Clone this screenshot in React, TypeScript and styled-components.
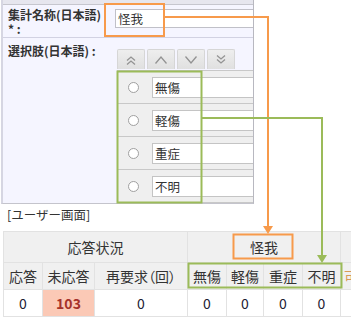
import React from 'react';
import styled, { createGlobalStyle } from 'styled-components';

const GlobalStyle = createGlobalStyle`
  html, body {
    margin: 0;
    padding: 0;
    background: #ffffff;
  }
  body {
    font-family: 'Noto Sans CJK JP', 'Noto Sans', sans-serif;
    color: #333;
  }
`;

const ORANGE = '#f79a4b';
const GREEN = '#9bbb59';

const Canvas = styled.div`
  position: relative;
  width: 351px;
  height: 322px;
  overflow: hidden;
  background: #fff;
`;

const FormPanel = styled.div`
  width: 253px;
  height: 204px;
  margin-left: 1px;
  border-left: 2px solid #d6d6e2;
  border-right: 1px solid #b8b8c0;
  border-bottom: 1px solid #c4c4cc;
  background: #f5f5ff;
  overflow: hidden;
  display: flex;
  flex-direction: column;
  box-sizing: border-box;
`;

const TopBand = styled.div`
  height: 4px;
  background: #e6e6ee;
  border-bottom: 1px solid #c6c6ce;
`;

const FormRow = styled.div<{ $h: number; $line?: boolean }>`
  display: grid;
  grid-template-columns: 109px 1fr;
  height: ${(p) => p.$h}px;
  border-bottom: ${(p) => (p.$line ? '1px solid #d2d2e2' : 'none')};
`;

const Label = styled.div<{ $top: number }>`
  padding: ${(p) => p.$top}px 0 0 5px;
  font-size: 12px;
  font-weight: bold;
  line-height: 14px;
  color: #333;
  white-space: nowrap;
`;

const Value = styled.div<{ $top: number }>`
  padding: ${(p) => p.$top}px 0 0 3px;
  min-width: 0;
`;

const NameInput = styled.div`
  height: 17px;
  width: 200px;
  background: #fff;
  border: 1px solid #c0c0c8;
  font-size: 12.5px;
  line-height: 17px;
  padding-left: 2px;
  color: #333;
`;

const MoveBar = styled.div`
  display: flex;
  gap: 2px;
  margin-left: 2px;
  height: 20px;
  margin-bottom: 1px;
`;

const MoveButton = styled.div`
  width: 28px;
  height: 20px;
  background: linear-gradient(#eeeeee, #e0e0e0);
  border: 1px solid #d6d6d6;
  border-bottom: none;
  box-sizing: border-box;
  border-radius: 2px 2px 0 0;
  display: flex;
  align-items: center;
  justify-content: center;
`;

const ChoiceList = styled.div`
  margin-left: 2px;
  width: 200px;
  border-top: 1px solid #c8c8c8;
`;

const ChoiceRow = styled.div`
  height: 32px;
  background: #efefef;
  border-bottom: 1px solid #c8c8c8;
  display: flex;
  align-items: center;
`;

const Radio = styled.span`
  width: 9px;
  height: 9px;
  border-radius: 50%;
  border: 1px solid #a0a0a0;
  background: #fff;
  margin-left: 11px;
  flex: none;
`;

const ChoiceInput = styled.div`
  margin-left: 13px;
  height: 19px;
  flex: 1;
  background: #fff;
  border: 1px solid #c4c4c4;
  border-right: none;
  font-size: 12.5px;
  line-height: 19px;
  padding-left: 2px;
  color: #333;
`;

const Caption = styled.div`
  height: 27px;
  padding-left: 7px;
  font-size: 12.5px;
  line-height: 22px;
  color: #333;
`;

const Summary = styled.table`
  margin-left: 3px;
  border-collapse: collapse;
  table-layout: fixed;
  width: 380px;
  font-size: 14px;
  font-feature-settings: 'palt';
`;

const HeadCell = styled.th<{ $h: number; $tint?: string }>`
  height: ${(p) => p.$h}px;
  padding: 0;
  background: #f0f0f0;
  border: 1px solid #e2e2e2;
  font-weight: normal;
  color: ${(p) => p.$tint || '#333'};
  text-align: center;
  white-space: nowrap;
  overflow: hidden;
`;

const DataCell = styled.td<{ $alert?: boolean }>`
  height: 26px;
  padding: 0;
  border: 1px solid #e2e2e2;
  text-align: center;
  font-size: 14px;
  background: ${(p) => (p.$alert ? '#fbc9b6' : '#fff')};
  color: ${(p) => (p.$alert ? '#a6332b' : '#223')};
  font-weight: ${(p) => (p.$alert ? 'bold' : 'normal')};
`;

const Overlay = styled.svg`
  position: absolute;
  left: 0;
  top: 0;
  pointer-events: none;
`;

const Chevrons = ({ dir, double }: { dir: 'up' | 'down'; double?: boolean }) => {
  const flip = dir === 'down';
  const pts = double
    ? ['3,7.5 7,4 11,7.5', '3,11.5 7,8 11,11.5']
    : ['1.5,10.5 7,4 12.5,10.5'];
  return (
    <svg width="14" height="14" viewBox="0 0 14 14">
      <g transform={flip ? 'translate(0 14) scale(1 -1)' : undefined}>
        {pts.map((p) => (
          <polyline key={p} points={p} fill="none" stroke="#939393" strokeWidth="1.3" />
        ))}
      </g>
    </svg>
  );
};

const choices = ['無傷', '軽傷', '重症', '不明'];

export default function App() {
  return (
    <>
      <GlobalStyle />
      <Canvas>
        <FormPanel>
          <TopBand />
          <FormRow $h={33} $line>
            <Label $top={3}>
              集計名称(日本語)
              <br />* :
            </Label>
            <Value $top={4}>
              <NameInput>怪我</NameInput>
            </Value>
          </FormRow>
          <FormRow $h={165}>
            <Label $top={6}>選択肢(日本語) :</Label>
            <Value $top={11}>
              <MoveBar>
                <MoveButton>
                  <Chevrons dir="up" double />
                </MoveButton>
                <MoveButton>
                  <Chevrons dir="up" />
                </MoveButton>
                <MoveButton>
                  <Chevrons dir="down" />
                </MoveButton>
                <MoveButton>
                  <Chevrons dir="down" double />
                </MoveButton>
              </MoveBar>
              <ChoiceList>
                {choices.map((c) => (
                  <ChoiceRow key={c}>
                    <Radio />
                    <ChoiceInput>{c}</ChoiceInput>
                  </ChoiceRow>
                ))}
              </ChoiceList>
            </Value>
          </FormRow>
        </FormPanel>

        <Caption>[ユーザー画面]</Caption>

        <Summary>
          <colgroup>
            <col style={{ width: 39 }} />
            <col style={{ width: 52 }} />
            <col style={{ width: 93 }} />
            <col style={{ width: 39 }} />
            <col style={{ width: 37 }} />
            <col style={{ width: 39 }} />
            <col style={{ width: 38 }} />
            <col style={{ width: 43 }} />
          </colgroup>
          <thead>
            <tr>
              <HeadCell $h={30} colSpan={3}>応答状況</HeadCell>
              <HeadCell $h={30} colSpan={4}>怪我</HeadCell>
              <HeadCell $h={30} />
            </tr>
            <tr>
              <HeadCell $h={26}>応答</HeadCell>
              <HeadCell $h={26}>未応答</HeadCell>
              <HeadCell $h={26}>再要求（回）</HeadCell>
              {choices.map((c) => (
                <HeadCell key={c} $h={26}>{c}</HeadCell>
              ))}
              <HeadCell $h={26} $tint="#d89a55" style={{ textAlign: 'left', paddingLeft: 3 }}>
                可否
              </HeadCell>
            </tr>
          </thead>
          <tbody>
            <tr>
              <DataCell>0</DataCell>
              <DataCell $alert>103</DataCell>
              <DataCell>0</DataCell>
              <DataCell>0</DataCell>
              <DataCell>0</DataCell>
              <DataCell>0</DataCell>
              <DataCell>0</DataCell>
              <DataCell />
            </tr>
          </tbody>
        </Summary>

        <Overlay width="351" height="322" viewBox="0 0 351 322">
          <g fill="none" strokeWidth="2">
            <rect x="105" y="4" width="59" height="32" stroke={ORANGE} />
            <polyline points="164,17 268,17 268,228" stroke={ORANGE} />
            <rect x="233.5" y="234.5" width="59" height="24" stroke={ORANGE} />
            <rect x="117.5" y="71.5" width="84" height="131" stroke={GREEN} />
            <polyline points="202,118 322,118 322,257" stroke={GREEN} />
            <rect x="188.5" y="263.5" width="153" height="24" stroke={GREEN} />
          </g>
          <polygon points="263,226 273,226 268,234" fill={ORANGE} />
          <polygon points="317,255 327,255 322,263" fill={GREEN} />
        </Overlay>
      </Canvas>
    </>
  );
}
